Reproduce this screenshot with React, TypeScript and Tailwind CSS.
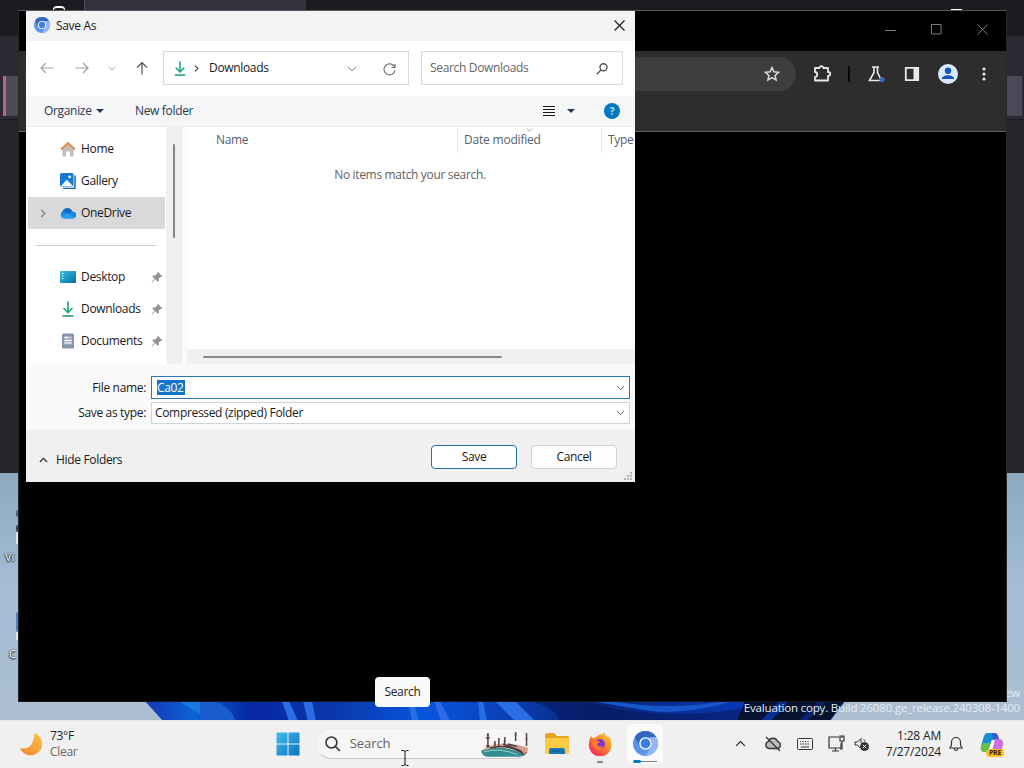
import React, { useState } from 'react';
import clsx from 'clsx';

type IconProps = { className?: string };

const Chevron = ({ className }: IconProps) => (
    <svg viewBox="0 0 10 6" fill="none" stroke="currentColor" className={clsx('shrink-0', className)}>
        <path d="M1 0.8 5 4.8 9 0.8" />
    </svg>
);

const ChromiumIcon = ({ className }: IconProps) => (
    <svg viewBox="0 0 24 24" className={clsx('shrink-0', className)}>
        <circle cx="12" cy="12" r="12" fill="#5a94ee" />
        <path d="M1.6 6A12 12 0 0 1 22.4 6H12a6 6 0 0 0-5.2 9Z" fill="#3568bd" />
        <path d="M22.4 6A12 12 0 0 1 12 24l5.2-9A6 6 0 0 0 17 8.500L16 6Z" fill="#92b8f6" />
        <circle cx="12" cy="12" r="6" fill="#fff" />
        <circle cx="12" cy="12" r="4.700" fill="#3c7ee0" />
    </svg>
);

const DownloadIcon = ({ className }: IconProps) => (
    <svg viewBox="0 0 16 16" fill="none" className={clsx('shrink-0', className)}>
        <path d="M8 0.500V11M3.500 7 8 11.500 12.500 7" stroke="#1faa86" strokeWidth="1.700" />
        <path d="M2.500 15H13.500" stroke="#2b9c80" strokeWidth="1.700" />
    </svg>
);

const HomeIcon = () => (
    <svg viewBox="0 0 16 16" className="h-4 w-4 shrink-0">
        <path d="M2.500 7 8 2l5.500 5v8.500H10V10.500H6v5H2.500Z" fill="#c5bdb9" />
        <path d="M1 8.500 8 2l7 6.500" fill="none" stroke="#e28b50" strokeWidth="2" />
    </svg>
);

const GalleryIcon = () => (
    <svg viewBox="0 0 16 16" className="h-4 w-4 shrink-0">
        <path d="M15 2.500V14.500a1 1 0 0 1-1 1H3" fill="none" stroke="#1765a8" strokeWidth="1.500" />
        <rect x="0" y="0" width="13.500" height="13.500" rx="1.500" fill="#1579d3" />
        <path d="M1 13 6 7.500q.8-.8 1.600 0L13 13Z" fill="#eaf7ff" />
        <circle cx="9.700" cy="3.800" r="1.400" fill="#fff" />
    </svg>
);

const OneDriveIcon = () => (
    <svg viewBox="0 0 16 16" className="h-4 w-4 shrink-0">
        <path d="M4 13.500A4 4 0 0 1 2.600 6.200 5.300 5.300 0 0 1 12.300 6.500 3.500 3.500 0 0 1 13 13.500Z" fill="#1688dd" />
        <path d="M2.600 6.200A5.300 5.300 0 0 1 12.300 6.500Q10 6.500 8.500 8.800L4.500 6.300Z" fill="#1467bd" />
        <path d="M.8 12 8 8.500l7 4q-.8 1-2 1H4q-2.200 0-3.200-1.500Z" fill="#29a2ef" />
    </svg>
);

const DesktopIcon = () => (
    <svg viewBox="0 0 16 16" className="h-4 w-4 shrink-0">
        <defs>
            <linearGradient id="desk" x1="0" y1="0" x2="1" y2="1">
                <stop stopColor="#35c3da" />
                <stop offset="1" stopColor="#0b6daa" />
            </linearGradient>
        </defs>
        <rect y="2" width="16" height="12" rx="1" fill="url(#desk)" />
        <path d="M2 4.500h1.500M2 7h1.500M2 9.500h1.500" stroke="#d9fbff" strokeWidth="1.200" />
    </svg>
);

const DocumentIcon = () => (
    <svg viewBox="0 0 16 16" className="h-4 w-4 shrink-0">
        <rect x="2" y="0.500" width="12" height="15" rx="1.200" fill="#8796aa" />
        <rect x="4" y="3" width="8" height="8.500" fill="#a9b5c3" />
        <path d="M4.500 4.500h4M4.500 7.500h7M4.500 10h7" stroke="#fff" strokeWidth="1.200" />
    </svg>
);

const PinIcon = () => (
    <svg viewBox="0 0 12 12" className="h-3 w-3 shrink-0" fill="#929292">
        <path d="M7 1 11.300 5.200 10.300 6 9.500 5.800 7.500 8l.1 1.900-1 .8L4.300 8.300 1 11.500.5 11 3.700 7.700 1.400 5.400l.8-1 2 .1 2-2L6.100 1.700Z" />
    </svg>
);

const sidebarTop = [
    { label: 'Home', icon: <HomeIcon /> },
    { label: 'Gallery', icon: <GalleryIcon /> },
    { label: 'OneDrive', icon: <OneDriveIcon /> },
];

const sidebarPinned = [
    { label: 'Desktop', icon: <DesktopIcon /> },
    { label: 'Downloads', icon: <DownloadIcon className="h-4 w-4" /> },
    { label: 'Documents', icon: <DocumentIcon /> },
];

const Wallpaper = () => (
    <svg className="absolute inset-0 h-full w-full" viewBox="0 0 1024 768" preserveAspectRatio="none">
        <defs>
            <linearGradient id="sky" x1="0" y1="0.6" x2="0" y2="1">
                <stop stopColor="#8aa7bd" />
                <stop offset="0.4" stopColor="#a4bcd5" />
                <stop offset="1" stopColor="#afc0cf" />
            </linearGradient>
            <linearGradient id="bloom" x1="145" x2="845" gradientUnits="userSpaceOnUse">
                <stop stopColor="#1736b4" />
                <stop offset="0.07" stopColor="#0b63d4" />
                <stop offset="0.15" stopColor="#0727a3" />
                <stop offset="0.28" stopColor="#0a3aae" />
                <stop offset="0.4" stopColor="#0755dd" />
                <stop offset="0.5" stopColor="#0a43bd" />
                <stop offset="0.65" stopColor="#082477" />
                <stop offset="0.85" stopColor="#0a38b5" />
                <stop offset="1" stopColor="#071a50" />
            </linearGradient>
        </defs>
        <rect width="1024" height="768" fill="url(#sky)" />
        <path d="M145 701H845L830 721H163Z" fill="url(#bloom)" />
        <path d="M178 701 200 714V701Z" fill="#1479e1" />
        <path d="M200 701h14q16 5 22 20h-36Z" fill="#185cd0" />
        <path d="M282 701h7l9 20h-9ZM303 701h9l4 20h-8ZM408 701h5l6 20h-7ZM434 701h6l10 20h-9ZM478 701h5l4 20h-7ZM495 701h20l20 20h-20Z" fill="#2b6de4" />
        <path d="M530 701h50q40 10 80 13 60 0 80-6l5 13H560q-5-14-30-20Z" fill="#06195c" opacity="0.6" />
        <path d="M590 701h20q60 10 115 0h10q-50 14-85 10Z" fill="#1757cb" />
        <path d="M745 701 737 721h92l13-20h-15l-20 20h-8l20-20h-30l-18 20h-10l18-20Z" fill="#06122f" />
    </svg>
);

// Dark browser window left open behind everything else
const BackWindow = () => (
    <div className="absolute left-0 top-0 flex h-[473px] w-[1024px] flex-col bg-[#26252c]">
        <div className="flex h-9 bg-[#1c1b22]">
            <div className="flex h-3 w-[81px] items-start justify-end pr-4 pt-[6px]">
                <div className="h-2 w-3 rounded-t-sm border-x border-t-2 border-white" />
            </div>
            <div className="ml-[3px] h-9 w-[222px] border-l border-[#4d4b57] bg-[#34333d]" />
            <div className="ml-[645px] mt-[9px] h-[2px] w-[11px] bg-white" />
        </div>
        <div className="h-10 bg-[#2b2a33]" />
        <div className="flex h-11 justify-between border-b border-[#1a1920] bg-[#2b2a33]">
            <div className="ml-[3px] h-10 w-4 border-l-[3px] border-[#b65f9b] bg-[#4b4a55]" />
            <div className="mr-[2px] h-10 w-4 bg-[#4a4958]" />
        </div>
    </div>
);

const ChromiumWindow = () => (
    <div className="absolute left-[18px] top-[10px] flex h-[692px] w-[989px] flex-col border border-t-[#55555a] border-x-[#29292b] border-b-[#17171a] bg-black">
        <div className="flex h-10 items-center justify-end gap-[35px] pb-[3px] pr-[18px] text-[#7b7b78]">
            <svg viewBox="0 0 11 11" className="h-[11px] w-[11px]" stroke="currentColor"><path d="M0 6.500h11" /></svg>
            <svg viewBox="0 0 11 11" className="h-[11px] w-[11px]" fill="none" stroke="currentColor"><path d="M.5.5h9.500v9.500H.5Z" /></svg>
            <svg viewBox="0 0 11 11" className="h-[11px] w-[11px]" stroke="currentColor"><path d="m.5.5 10 10M10.500.5l-10 10" /></svg>
        </div>
        <div className="flex h-[81px] items-start border-b border-[#626262] bg-[#2d2d2d] pl-[6px] pt-[6px]">
            <div className="flex h-[34px] w-[771px] items-center justify-end rounded-full bg-[#3e3e3e] pr-4">
                <svg viewBox="0 0 16 16" className="h-4 w-4" fill="none" stroke="#dadada" strokeWidth="1.500"><path d="m8 1.500 1.900 4.300 4.700.5-3.500 3.100 1 4.600L8 11.600 3.900 14l1-4.600L1.400 6.300l4.700-.5Z" /></svg>
            </div>
            <div className="flex h-[34px] items-center">
                <svg viewBox="0 0 20 20" className="ml-[16px] h-5 w-5" fill="none" stroke="#e8e8e8" strokeWidth="1.800">
                    <path d="M3 4h4.500c.2-2.500 3.500-2.500 3.700 0H16v4c3 .2 3 3.800 0 4v4.500H3V13c3-.3 3-4.700 0-5Z" strokeLinejoin="round" />
                </svg>
                <div className="ml-[16px] h-4 w-[2px] bg-[#080808]" />
                <svg viewBox="0 0 18 18" className="ml-[17px] h-[18px] w-[18px]">
                    <path d="M5 2h7M7 2v5.500L2.500 15.500h12L10.500 7.500V2" fill="none" stroke="#e8e8e8" strokeWidth="1.600" />
                    <circle cx="15" cy="14.500" r="2.600" fill="#3966bd" />
                </svg>
                <svg viewBox="0 0 16 16" className="ml-[19px] h-4 w-4">
                    <path d="M1.800 1.800h12.400v12.400H1.800Z" fill="none" stroke="#e8e8e8" strokeWidth="1.800" />
                    <path d="M9.500 2h5v12h-5Z" fill="#e8e8e8" />
                </svg>
                <svg viewBox="0 0 20 20" className="ml-[18px] h-5 w-5">
                    <circle cx="10" cy="10" r="10" fill="#dce8fc" />
                    <circle cx="10" cy="6.800" r="3.200" fill="#1557bd" />
                    <path d="M3.800 15c.4-5 12-5 12.400 0Z" fill="#1557bd" />
                </svg>
                <svg viewBox="0 0 16 16" className="ml-[18px] h-4 w-4" fill="#e8e8e8">
                    <circle cx="8" cy="3" r="1.600" /><circle cx="8" cy="8" r="1.600" /><circle cx="8" cy="13" r="1.600" />
                </svg>
            </div>
        </div>
    </div>
);

const NavBar = () => (
    <div className="flex h-[55px] items-center bg-white pb-px pl-[14px]">
        <svg viewBox="0 0 14 12" className="h-3 w-[14px]" fill="none" stroke="#a2a2a2" strokeWidth="1.200"><path d="M13.500 6H1M6 1 1 6l5 5" /></svg>
        <svg viewBox="0 0 14 12" className="ml-[21px] h-3 w-[14px]" fill="none" stroke="#a2a2a2" strokeWidth="1.200"><path d="M.5 6H13M8 1l5 5-5 5" /></svg>
        <Chevron className="ml-[19px] h-[5px] w-2 text-[#858585]" />
        <svg viewBox="0 0 12 14" className="ml-[20px] h-[14px] w-3" fill="none" stroke="#555" strokeWidth="1.200"><path d="M6 13.500V1.500M1 6.500l5-5 5 5" /></svg>
        <div className="ml-[15px] flex h-[34px] w-[246px] items-center border border-[#d9d9d9] pl-[8px]">
            <DownloadIcon className="h-[15px] w-4" />
            <svg viewBox="0 0 5 8" className="ml-[6px] h-[7px] w-[5px]" fill="none" stroke="#333" strokeWidth="1.200"><path d="m.8.800 3.200 3.200L.8 7.200" /></svg>
            <span className="ml-[10px] w-[138px] text-[#191919]">Downloads</span>
            <Chevron className="mt-[2px] h-[6px] w-[10px] text-[#777]" />
            <svg viewBox="0 0 13 13" className="ml-[26px] mt-[2px] h-[13px] w-[13px]" fill="none" stroke="#777" strokeWidth="1.200"><path d="M11.500 4A5.500 5.500 0 1 0 12 7M12 1v3.500H8.500" /></svg>
        </div>
        <div className="ml-3 flex h-[34px] w-[202px] items-center justify-between border border-[#d9d9d9] pl-2 pr-[14px] text-[#666]">
            <span>Search Downloads</span>
            <svg viewBox="0 0 12 12" className="mt-[2px] h-3 w-3" fill="none" stroke="#555" strokeWidth="1.400"><circle cx="7.500" cy="4.300" r="3.500" /><path d="M5 7 .8 11.200" /></svg>
        </div>
    </div>
);

const Toolbar = () => (
    <div className="flex h-[31px] items-center border-b border-[#ebebeb] bg-[#f4f6f7] pl-[18px] text-[#293750]">
        <span className="w-[52px]">Organize</span>
        <svg viewBox="0 0 8 4" className="h-1 w-2" fill="#293750"><path d="M0 0h8L4 4Z" /></svg>
        <span className="ml-[31px]">New folder</span>
        <div className="ml-auto flex items-center pr-[15px]">
            <svg viewBox="0 0 12 11" className="h-[11px] w-3" stroke="#151515"><path d="M0 .5h12M0 3.500h12M0 6.500h12M0 9.500h12" /></svg>
            <svg viewBox="0 0 8 4" className="ml-3 h-1 w-2" fill="#293750"><path d="M0 0h8L4 4Z" /></svg>
            <div className="ml-[29px] flex h-4 w-4 items-center justify-center rounded-full bg-[#0877bd] text-[10px] font-bold text-[#a9e6ff]">?</div>
        </div>
    </div>
);

const Sidebar = () => {
    const [selected, setSelected] = useState('OneDrive');

    return (
        <div className="flex w-[140px] flex-col bg-white pl-[2px] pr-px pt-[6px]">
            {sidebarTop.map(({ label, icon }) => (
                <button
                    key={label}
                    onClick={() => setSelected(label)}
                    className={clsx('flex h-8 w-full shrink-0 items-center', selected === label && 'bg-[#d9d9d9]')}
                >
                    <div className="flex w-8 justify-center pr-[3px]">
                        {selected === label && (
                            <svg viewBox="0 0 6 10" className="h-[9px] w-[6px]" fill="none" stroke="#777" strokeWidth="1.200"><path d="m1 1 4 4-4 4" /></svg>
                        )}
                    </div>
                    {icon}
                    <span className="ml-[5px]">{label}</span>
                </button>
            ))}
            <div className="ml-2 mr-[9px] flex h-8 shrink-0 items-center"><div className="h-px w-full bg-[#cfcfcf]" /></div>
            {sidebarPinned.map(({ label, icon }) => (
                <button key={label} className="flex h-8 w-full shrink-0 items-center pl-8">
                    {icon}
                    <span className="ml-[5px] w-[70px] text-left">{label}</span>
                    <PinIcon />
                </button>
            ))}
        </div>
    );
};

const FileList = () => (
    <div className="flex min-w-0 flex-1 flex-col bg-white">
        <div className="flex h-[26px] shrink-0 items-center overflow-hidden text-[#555f6d]">
            <span className="ml-[29px] w-[241px]">Name</span>
            <div className="relative flex h-full w-36 items-center border-l border-[#e8e8e8] pl-[6px] tracking-[-0.2px]">
                Date modified
                <Chevron className="absolute left-[68px] top-px h-1 w-[7px] text-[#777]" />
            </div>
            <div className="flex h-full items-center border-l border-[#e8e8e8] pl-[6px]">Type</div>
        </div>
        <p className="mt-[14px] pr-[2px] text-center text-[#626262]">No items match your search.</p>
        <div className="mt-auto flex h-[15px] items-center bg-[#f0f0f0] pl-4">
            <div className="h-[2px] w-[299px] rounded bg-[#878787]" />
        </div>
    </div>
);

const SaveDialog = () => (
    <div className="absolute left-[26px] top-[11px] flex h-[471px] w-[609px] flex-col bg-[#f0f0f0] text-[12px] leading-4 tracking-[-0.33px] text-[#1a1a1a]">
        <div className="flex h-[30px] items-center bg-[#f3f3f3] pb-[2px] pl-2 pr-[10px]">
            <ChromiumIcon className="h-4 w-4" />
            <span className="ml-[6px] mt-px">Save As</span>
            <svg viewBox="0 0 11 11" className="ml-auto h-[11px] w-[11px]" stroke="#222" strokeWidth="1.200"><path d="m.5.5 10 10M10.500.5l-10 10" /></svg>
        </div>
        <NavBar />
        <Toolbar />
        <div className="flex h-[237px]">
            <Sidebar />
            <div className="w-4 bg-[#f0f0f0] pl-[7px] pt-[17px]"><div className="h-[94px] w-[2px] rounded bg-[#858585]" /></div>
            <div className="w-[5px] bg-[#fbfbfb]" />
            <FileList />
        </div>
        <div className="flex h-[66px] flex-col gap-[3px] bg-[#f9f9f9] pr-[5px] pt-3">
            <div className="flex h-[23px] items-center">
                <label className="w-[125px] shrink-0 pr-[5px] text-right">File name:</label>
                <div className="flex h-full flex-1 items-center justify-between border border-[#2879ae] bg-white pl-[5px] pr-1">
                    <span className="mb-px h-[15px] bg-[#1675ca] pr-px leading-[15px] text-white">Ca02</span>
                    <Chevron className="h-[6px] w-[9px] text-[#555]" />
                </div>
            </div>
            <div className="flex h-[22px] items-center">
                <label className="w-[125px] shrink-0 pr-[5px] text-right">Save as type:</label>
                <div className="flex h-full flex-1 items-center justify-between border border-[#cbd5da] bg-white pl-[3px] pr-1">
                    <span>Compressed (zipped) Folder</span>
                    <Chevron className="h-[6px] w-[9px] text-[#555]" />
                </div>
            </div>
        </div>
        <div className="relative flex h-[52px] items-center pl-[13px] pr-[18px] pt-[2px]">
            <Chevron className="mt-[6px] h-[6px] w-[9px] rotate-180 stroke-[1.500] text-[#333]" />
            <span className="ml-2 mt-[6px]">Hide Folders</span>
            <button className="ml-auto h-6 w-[86px] rounded border border-[#2471a3] bg-white">Save</button>
            <button className="ml-[14px] h-6 w-[86px] rounded border border-[#d0d0d0] bg-[#fdfdfd]">Cancel</button>
            <svg viewBox="0 0 8 8" className="absolute bottom-[2px] right-[3px] h-2 w-2" fill="#b2b2b2"><path d="M6 0h2v2H6ZM3 3h2v2H3ZM6 3h2v2H6ZM0 6h2v2H0ZM3 6h2v2H3ZM6 6h2v2H6Z" /></svg>
        </div>
    </div>
);

const BridgeArt = () => (
    <svg viewBox="0 0 50 28" className="h-7 w-[50px]">
        <path d="M1 21q8-5 18-4 17 2 28 2 1 7-8 8H8q-6-1-7-6Z" fill="#338e93" />
        <path d="M4 18q18-10 45 3l-4 4q-20-11-41-5Z" fill="#edb79d" />
        <path d="M10 18q20-5 35 7M23 14l24 9M28 14l20 5" stroke="#493c40" strokeWidth="1.600" fill="none" />
        <path d="M35 14l14 4-4 6Z" fill="#d69c8b" />
        <path d="M8 3v15M6 8h4M7 5h2M6 16h4M15 11v8M19 8v8M25 7v7M36 2v9M35 5h2M47 3v13M46 9h2M14 14h2M24 11h2" stroke="#5d4949" strokeWidth="1.600" />
        <path d="M4 22q16-5 34 3" stroke="#9bd3ce" fill="none" />
    </svg>
);

const FolderIcon = () => (
    <svg viewBox="0 0 26 24" className="h-6 w-[26px]">
        <path d="M1 3q0-2 2-2h7l3 3h10q2 0 2 2v15H1Z" fill="#e5a51f" />
        <path d="M1 6h22q2 0 2 2v12q0 2-2 2H3q-2 0-2-2Z" fill="#fbcb43" />
        <path d="M5 22v-4q0-2 2-2h12q2 0 2 2v4Z" fill="#1777b8" />
        <path d="M8 19h10" stroke="#0c568b" />
    </svg>
);

const FirefoxIcon = () => (
    <svg viewBox="0 0 24 24" className="h-6 w-6 shrink-0">
        <defs>
            <linearGradient id="fox" x1="1" y1="0" x2="0.2" y2="1">
                <stop stopColor="#ffe13b" />
                <stop offset="0.4" stopColor="#ff9524" />
                <stop offset="1" stopColor="#ee2359" />
            </linearGradient>
        </defs>
        <path d="M3 4 5 6.500l3-1.500q3-3 7-3V0q3 2 4 5l2-.5q2.800 4 2.300 9A11.200 11.200 0 0 1 .8 13Q.8 8 3 4Z" fill="url(#fox)" />
        <circle cx="12" cy="12" r="5" fill="#8038cc" />
        <path d="M4 9q4-2 8 1l-3 2q1 4 6 2-2 5-7 3-4-2-4-8Z" fill="#ff7b28" />
    </svg>
);

const CopilotIcon = () => (
    <div className="relative h-6 w-6">
        <svg viewBox="0 0 24 24" className="h-6 w-6">
            <path d="M7 1h7q3 0 4 3l1 4h-7L8 20H5q-5 0-4-6L4 4q1-3 3-3Z" fill="#168fd2" />
            <path d="M3 11h8L8 20H5q-5 0-4-6Z" fill="#65c14c" />
            <path d="M12 1h2q3 0 4 3l2 6h-6Z" fill="#4154d6" />
            <path d="M15 7h5q4 1 3 6l-2 7q-1 3-4 3h-6Z" fill="#cf70db" />
            <path d="M9 17 12 8h3l-3 9Z" fill="#fff" />
        </svg>
        <span className="absolute bottom-[-1px] left-[6px] flex h-[8px] w-[18px] items-center justify-center rounded-sm bg-[#ffbd22] text-[7px] font-bold leading-none text-[#302000]">PRE</span>
    </div>
);

const Taskbar = () => (
    <div className="absolute bottom-0 left-0 flex h-12 w-[1024px] items-center border-t border-[#e5e8eb] bg-[#f0f0f0] pb-[2px] text-[12px] tracking-[-0.3px] text-[#222]">
        <div className="flex w-[276px] items-center pl-[19px]">
            <svg viewBox="0 0 24 24" className="h-6 w-6">
                <defs>
                    <linearGradient id="moon" x1="0" y1="1" x2="1" y2="0"><stop stopColor="#ef8434" /><stop offset="1" stopColor="#ffc545" /></linearGradient>
                </defs>
                <path d="M15.500 1a11.500 11.500 0 1 1-14.500 15q7 2 11-3 3-4 3.500-12Z" fill="url(#moon)" />
            </svg>
            <div className="ml-[7px] leading-4"><p>73°F</p><p className="text-[#666]">Clear</p></div>
        </div>
        <svg viewBox="0 0 24 24" className="h-6 w-6">
            <defs><linearGradient id="win" x1="0" y1="0" x2="1" y2="1"><stop stopColor="#42bcec" /><stop offset="1" stopColor="#0873c3" /></linearGradient></defs>
            <path d="M.5.5h11v11H.5ZM12.500.5h11v11h-11ZM.5 12.500h11v11H.5ZM12.500 12.500h11v11h-11Z" fill="url(#win)" />
        </svg>
        <div className="ml-4 flex h-[31px] w-[214px] items-center rounded-full border border-[#ececec] border-b-[#cacaca] bg-[#f6f6f6] pl-2">
            <svg viewBox="0 0 16 16" className="h-4 w-4" fill="none" stroke="#333" strokeWidth="1.600"><circle cx="6.500" cy="6.500" r="5.500" /><path d="m10.500 10.500 4.500 4.500" /></svg>
            <span className="ml-[9px] mt-px w-[131px] text-[13px] tracking-[-0.1px] text-[#626262]">Search</span>
            <BridgeArt />
        </div>
        <div className="ml-[14px]"><FolderIcon /></div>
        <div className="ml-[18px] flex h-10 w-6 flex-col items-center pt-2"><FirefoxIcon /><div className="mt-[5px] h-[2px] w-[6px] shrink-0 rounded bg-[#858585]" /></div>
        <div className="ml-[15px] flex h-10 w-9 flex-col items-center rounded bg-[#fafafa] pt-[7px]">
            <ChromiumIcon className="h-[25px] w-[25px]" />
            <div className="mt-[5px] h-px w-6 shrink-0 bg-[#78858c]"><div className="h-[3px] w-2 -translate-y-px rounded bg-[#087bc5]" /></div>
        </div>
        <div className="ml-auto flex items-center pr-5">
            <Chevron className="h-[7px] w-[11px] rotate-180" />
            <svg viewBox="0 0 18 16" className="ml-[18px] h-4 w-[18px]" fill="none" stroke="#333" strokeWidth="1.300">
                <path d="M5 12.500a3.500 3.500 0 0 1-.8-6.800 5 5 0 0 1 9.500 0 3.500 3.500 0 0 1 0 6.800Z" fill="#bbb" /><path d="m2 1 14 14" />
            </svg>
            <svg viewBox="0 0 16 12" className="ml-[15px] h-3 w-4" fill="none" stroke="#333">
                <rect x=".5" y=".5" width="15" height="11" rx="1" /><path d="M3 3.500h10" strokeDasharray="1 1.500" /><path d="M3 6h10" strokeDasharray="1.500 1" /><path d="M4 9h8" />
            </svg>
            <svg viewBox="0 0 17 17" className="ml-[15px] h-[17px] w-[17px]" fill="none" stroke="#333" strokeWidth="1.200">
                <path d="M11 2H1v11h12V8M4 16h7M7.500 13v3" /><path d="M12 1h4v5h-4ZM14 6v8h-2M14 1v2" />
            </svg>
            <svg viewBox="0 0 15 15" className="ml-[9px] h-[15px] w-[15px]" fill="none" stroke="#333">
                <path d="M6 12 3.500 9H1V6h2.500L7 2.500V7" /><path d="M9.500 3.500q1.500.5 1.500 2" /><circle cx="10.500" cy="10.500" r="4" fill="#333" /><path d="m8.800 8.800 3.400 3.400M12.200 8.800l-3.400 3.400" stroke="#fff" />
            </svg>
            <div className="ml-[9px] w-[63px] whitespace-nowrap text-right text-[12px] leading-4 tracking-[-0.18px]"><p>1:28 AM</p><p>7/27/2024</p></div>
            <svg viewBox="0 0 14 16" className="ml-2 h-4 w-[14px]" fill="none" stroke="#333" strokeWidth="1.200"><path d="M1 12q1.500-1.500 1.500-4V6a4.500 4.500 0 0 1 9 0v2q0 2.500 1.500 4ZM5 12.500q2 4 4 0" /></svg>
            <div className="ml-[17px]"><CopilotIcon /></div>
        </div>
    </div>
);

export default function App(): React.JSX.Element {
    return (
        <main className="relative h-[768px] w-[1024px] overflow-hidden bg-[#afc0cf] font-['Open_Sans','Noto_Sans',sans-serif]">
            <Wallpaper />
            <BackWindow />
            <span className="absolute left-[5px] top-[549px] text-[11px] leading-4 text-white [text-shadow:0_1px_2px_#000,0_0_2px_#000]">Vi</span>
            <span className="absolute left-[9px] top-[646px] text-[11px] leading-4 text-white [text-shadow:0_1px_2px_#000,0_0_2px_#000]">C</span>
            <div className="absolute left-[16px] top-[510px] h-[7px] w-1 rounded bg-[#526477]" />
            <div className="absolute left-[16px] top-[525px] h-[7px] w-1 rounded bg-[#3d4956]" />
            <div className="absolute left-[16px] top-[532px] h-3 w-1 bg-[#dce4eb]" />
            <div className="absolute left-[16px] top-[612px] h-5 w-1 rounded bg-[#4c82bd]" />
            <div className="absolute left-[16px] top-[632px] h-2 w-1 bg-[#dce4eb]" />
            <div className="absolute right-[4px] top-[685px] text-right text-[11.500px] leading-[15px] tracking-[-0.18px] text-[#e5edf4]">
                <p>ew</p>
                <p>Evaluation copy. Build 26080.ge_release.240308-1400</p>
            </div>
            <ChromiumWindow />
            <SaveDialog />
            <div className="absolute left-[375px] top-[677px] flex h-[30px] w-[55px] items-center justify-center rounded bg-[#fafafa] text-[12px] tracking-[-0.3px] text-[#222]">Search</div>
            <Taskbar />
            <svg viewBox="0 0 8 16" className="absolute left-[401px] top-[750px] h-4 w-2" fill="none" stroke="#111"><path d="M.5.5h2l1.500 1 1.500-1h2M4 1.500v13M.5 15.500h2l1.500-1 1.500 1h2" /></svg>
        </main>
    );
}
